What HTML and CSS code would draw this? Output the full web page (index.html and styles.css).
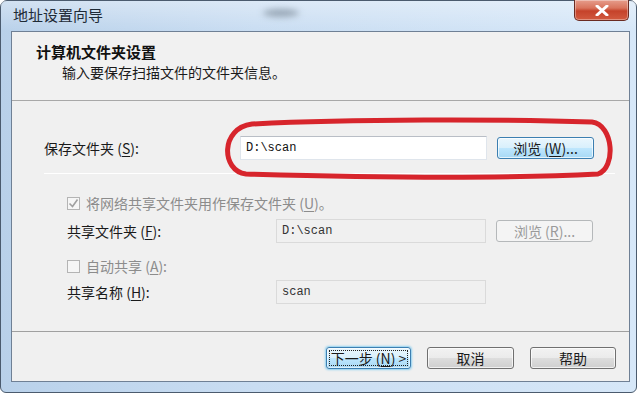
FILE: index.html
```html
<!DOCTYPE html>
<html lang="zh-CN">
<head>
    <meta charset="UTF-8">
    <meta name="viewport" content="width=device-width, initial-scale=1.0">
    <title>地址设置向导</title>
    <link rel="stylesheet" href="styles.css">
</head>
<body>
    <div class="window">
        <div class="titlebar">
            <span class="title">地址设置向导</span>
            <span class="smudge"></span>
            <button class="close" aria-label="关闭">
                <svg width="14" height="11" viewBox="0 0 14 11">
                    <path d="M2 1 L12 10 M12 1 L2 10" stroke="#fff" stroke-width="3" stroke-linecap="round"/>
                </svg>
            </button>
        </div>

        <div class="client">
            <div class="header">
                <div class="header-title">计算机文件夹设置</div>
                <div class="header-sub">输入要保存扫描文件的文件夹信息。</div>
            </div>

            <div class="body">
                <div class="row row-main">
                    <label class="label label-wide">保存文件夹 (<u>S</u>):</label>
                    <div class="field field-main">D:\scan</div>
                    <button class="btn btn-hover">浏览 (<u>W</u>)...</button>
                </div>

                <div class="divider"></div>

                <div class="group">
                    <div class="check-row">
                        <span class="check checked">
                            <svg width="11" height="11" viewBox="0 0 11 11">
                                <path d="M1.5 5.5 L4.5 8.5 L9.5 1.5" fill="none" stroke="#a0a0a0" stroke-width="1.6"/>
                            </svg>
                        </span>
                        <span class="muted">将网络共享文件夹用作保存文件夹 (<u>U</u>)。</span>
                    </div>
                    <div class="row row-share">
                        <label class="label label-group">共享文件夹 (<u>F</u>):</label>
                        <div class="field field-off">D:\scan</div>
                        <button class="btn btn-off" disabled>浏览 (<u>R</u>)...</button>
                    </div>
                    <div class="check-row check-row-2">
                        <span class="check"></span>
                        <span class="muted">自动共享 (<u>A</u>):</span>
                    </div>
                    <div class="row row-name">
                        <label class="label label-group">共享名称 (<u>H</u>):</label>
                        <div class="field field-off">scan</div>
                    </div>
                </div>
            </div>

            <div class="footer">
                <button class="btn btn-next"><span class="focus-ring">下一步 (<u>N</u>) &gt;</span></button>
                <button class="btn btn-cancel">取消</button>
                <button class="btn btn-help">帮助</button>
            </div>
        </div>

        <!-- red hand drawn mark around the save folder row -->
        <svg class="mark" width="637" height="393" viewBox="0 0 637 393">
            <path d="M252 124 C350 119, 500 119, 592 122 C614 125, 616 168, 598 174 C500 179, 350 177, 246 174 C221 171, 220 128, 252 124 Z"
                  fill="none" stroke="#d7252c" stroke-width="5" stroke-linejoin="round"/>
        </svg>
    </div>
</body>
</html>
```

FILE: styles.css
```css
* {
    box-sizing: border-box;
}
body {
    margin: 0;
    width: 637px;
    height: 393px;
    overflow: hidden;
    background: #fff;
    font-family: "Noto Sans CJK SC", "Noto Sans", sans-serif;
    font-size: 14px;
    color: #1a1a1a;
}
u {
    text-decoration: underline;
    text-underline-offset: 2px;
}
.window {
    position: relative;
    width: 637px;
    height: 393px;
    display: flex;
    flex-direction: column;
    border: 1px solid #4b5b6e;
    border-radius: 7px 7px 6px 6px;
    background: linear-gradient(90deg, #b9d1ea 0%, #c9ddf2 40%, #d6e7f8 100%);
}
.titlebar {
    height: 30px;
    display: flex;
    align-items: flex-start;
    position: relative;
    background: linear-gradient(180deg, rgba(255,255,255,0.35), rgba(255,255,255,0));
}
.title {
    margin: 4px 0 0 12px;
    font-size: 15px;
    line-height: 20px;
    color: #1e2a36;
}
.smudge {
    position: absolute;
    left: 262px;
    top: 8px;
    width: 36px;
    height: 8px;
    border-radius: 50%;
    background: #98a7b6;
    filter: blur(3px);
}
.close {
    margin-left: auto;
    margin-right: 7px;
    margin-top: -1px;
    width: 55px;
    height: 21px;
    border: 1px solid #6a2b22;
    border-top: none;
    border-radius: 0 0 5px 5px;
    background: linear-gradient(180deg, #e69d8c 0%, #d9745d 40%, #c5422a 55%, #d25a3f 100%);
    box-shadow: inset 0 0 0 1px rgba(255,255,255,0.35);
    display: flex;
    align-items: center;
    justify-content: center;
    padding: 0;
}
.client {
    flex: 1;
    margin: 0 6px 10px 10px;
    border: 1px solid #6f8095;
    background: #f0f0f0;
    display: flex;
    flex-direction: column;
}
.header {
    height: 69px;
    padding: 10px 0 0 24px;
    border-bottom: 1px solid #a8a8a8;
    background: #f1f1f1;
}
.header-title {
    font-weight: bold;
    font-size: 15px;
    line-height: 20px;
    color: #111;
}
.header-sub {
    margin-left: 26px;
    line-height: 20px;
}
.body {
    flex: 1;
    padding: 35px 14px 0 32px;
}
.row {
    display: flex;
    align-items: center;
    height: 24px;
}
.label {
    flex: none;
    line-height: 20px;
}
.label-wide {
    width: 196px;
}
.label-group {
    width: 209px;
}
.field {
    height: 24px;
    padding: 0 5px;
    display: flex;
    align-items: center;
    font-family: "Liberation Mono", monospace;
    font-size: 12px;
    color: #111;
}
.field-main {
    width: 247px;
    background: #fff;
    border: 1px solid #dfe5ec;
    border-top-color: #b9bec6;
}
.field-off {
    width: 210px;
    border: 1px solid #dadada;
    background: #f0f0f0;
    color: #333;
}
.btn {
    font-family: inherit;
    font-size: 14px;
    height: 22px;
    padding: 0;
    border: 1px solid #707070;
    border-radius: 3px;
    color: #1a1a1a;
    background: linear-gradient(180deg, #f2f2f2 0%, #ebebeb 48%, #dddddd 52%, #cfcfcf 100%);
    box-shadow: inset 0 0 0 1px rgba(255,255,255,0.7);
}
.row .btn {
    width: 97px;
    margin-left: 10px;
}
.btn-hover {
    border-color: #3c7fb1;
    background: linear-gradient(180deg, #eaf6fd 0%, #d9f0fc 48%, #bee6fd 52%, #a7d9f5 100%);
}
.btn-off {
    border-color: #b5b8ba;
    background: #f4f4f4;
    color: #9a9a9a;
    box-shadow: none;
}
.divider {
    height: 1px;
    margin: 13px 0 0 0;
    background: #c8c8c8;
    border-bottom: 1px solid #fff;
}
.group {
    padding-left: 23px;
}
.check-row {
    display: flex;
    align-items: center;
    height: 20px;
    margin-top: 19px;
}
.check-row-2 {
    margin-top: 13px;
}
.check {
    width: 13px;
    height: 13px;
    margin-right: 6px;
    border: 1px solid #b4b4b4;
    background: #f6f6f6;
    display: flex;
    align-items: center;
    justify-content: center;
}
.muted {
    color: #8c8c8c;
}
.row-share {
    margin-top: 6px;
}
.row-name {
    margin-top: 4px;
}
.footer {
    height: 50px;
    border-top: 1px solid #a0a0a0;
    display: flex;
    align-items: flex-start;
    justify-content: flex-end;
    gap: 16px;
    padding: 15px 13px 0 0;
}
.btn-next {
    width: 85px;
    border-color: #3c7fb1;
    background: linear-gradient(180deg, #eaf6fd 0%, #d9f0fc 48%, #bee6fd 52%, #a7d9f5 100%);
    box-shadow: 0 0 2px 1px #8fd0f0, inset 0 0 0 1px rgba(255,255,255,0.6);
    padding: 2px;
}
.focus-ring {
    display: flex;
    align-items: center;
    justify-content: center;
    height: 100%;
    border: 1px dotted #222;
}
.btn-cancel {
    width: 87px;
}
.btn-help {
    width: 86px;
}
.mark {
    position: absolute;
    left: -1px;
    top: -1px;
    pointer-events: none;
}
```
